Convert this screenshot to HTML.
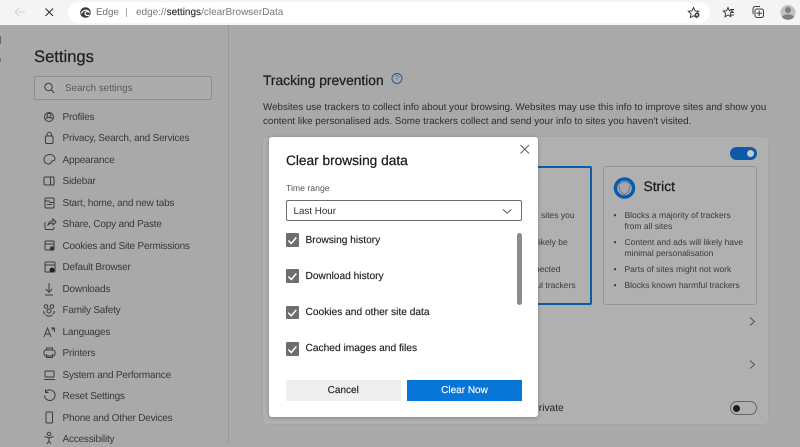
<!DOCTYPE html>
<html><head><meta charset="utf-8">
<style>
html,body{margin:0;padding:0}
body{width:800px;height:444px;overflow:hidden;position:relative;background:#a9a9a9;font-family:"Liberation Sans",sans-serif;color:#2a2a2a;text-rendering:geometricPrecision}
.a{position:absolute}
.t{position:absolute;white-space:nowrap;line-height:14px}
.n{position:absolute;left:62.5px;white-space:nowrap;font-size:10px;line-height:14px;color:#383838;letter-spacing:-.2px}
.s{position:absolute;font-size:8.5px;line-height:13px;white-space:nowrap;color:#3a3a3a}
svg{position:absolute;overflow:visible}
.i{fill:none;stroke:#3c3c3c;stroke-width:1}
.b{font-size:10.2px;color:#222;-webkit-text-stroke:.15px #222}
.h{-webkit-text-stroke:.25px currentColor}
.cb{position:absolute;left:285.5px;width:13.5px;height:13.5px;background:#6e6e6e;border-radius:1px}
</style></head><body>
<!-- top bar -->
<div class="a" style="left:0;top:0;width:800px;height:25px;background:#f4f4f4"></div>
<div class="a" style="left:68px;top:2px;width:642px;height:21px;background:#fff;border-radius:11px"></div>
<div class="a" style="left:0;top:36px;width:1px;height:8px;background:#666"></div>
<div class="a" style="left:0;top:58px;width:1px;height:4px;background:#777"></div>
<svg style="left:0;top:0" width="800" height="25">
<path d="M25 12H15M19.500 7.500L15 12l4.500 4.500" fill="none" stroke="#d4d4d4" stroke-width="1"/>
<path d="M45.500 8.500l7.500 7.500M53 8.500L45.500 16" fill="none" stroke="#333" stroke-width="1.100"/>
<circle cx="85.500" cy="12.500" r="5.300" fill="#3a3a3a"/><path d="M81.500 13.500c.8-3.500 5.500-4.500 7.500-1.500-2-.8-4-.2-4 1.500s2.500 2.500 4.500 1.500" fill="none" stroke="#fff" stroke-width="1.200"/>
<path d="M126.500 8v9" stroke="#aaa" stroke-width="1"/>
<path class="i" stroke-width=".9" d="M693.500 7.500l1.600 3.400 3.600.4-2.700 2.500.7 3.700-3.200-1.800-3.200 1.800.7-3.700-2.700-2.500 3.600-.4z"/>
<circle cx="697" cy="15" r="2.500" fill="#444"/><circle cx="697" cy="15" r="1" fill="#ddd"/>
<path class="i" d="M728 7.500l1.400 3.200 3.200.3-2.400 2.300.6 3.400-2.800-1.600-3 1.700.7-3.500-2.400-2.300 3.300-.3zM730 9.500h4M731 12.500h3M731 15h3"/>
<rect class="i" x="755" y="9" width="8.500" height="8.500" rx="2"/><path class="i" d="M753 14V9c0-1.500 1-2.500 2.500-2.500H760M759.200 10.500v5.500M756.500 13.200h5.500"/>
<circle cx="788" cy="12.500" r="7.500" fill="#c2c2c2"/><circle cx="788" cy="10" r="3" fill="#7e7e7e"/><path d="M782 17c1-3.500 11-3.500 12 0-2 3.500-10 3.500-12 0z" fill="#7e7e7e"/>
</svg>
<div class="t" style="left:96px;top:6px;font-size:9.800px;color:#707070">Edge</div>
<div class="t" style="left:136px;top:6px;font-size:10px;color:#777">edge://<span style="color:#333;-webkit-text-stroke:.15px #333">settings</span>/clearBrowserData</div>
<!-- sidebar -->
<div class="a" style="left:228px;top:25px;width:1px;height:419px;background:#979797"></div>
<div class="t h" style="left:34px;top:47px;font-size:16.600px;line-height:20px;color:#222">Settings</div>
<div class="a" style="left:34px;top:76px;width:176px;height:22px;border:1px solid #8f8f8f;border-radius:2px;background:#acacac"></div>
<svg style="left:0;top:0" width="230" height="444">
<circle class="i" cx="48.500" cy="87" r="3.700"/><path class="i" d="M51.300 90l3 3"/>
<g class="i">
<circle cx="49" cy="117" r="4.500"/><circle cx="49" cy="115.500" r="2"/><path d="M45.500 119c1-2 6-2 7 0"/>
<rect x="45.500" y="136" width="7.500" height="7.500" rx="1"/><path d="M47 136v-1.500a2.200 2.200 0 0 1 4.400 0V136"/>
<path d="M44 160c0-4 3-5.500 6-5.500s5 2 5 4.500-2 1-3 2-1 3-3 3-5-1-5-4z"/>
<rect x="44" y="177" width="10" height="8" rx="1"/><path d="M50.500 177v8"/>
<rect x="45" y="198" width="9" height="10" rx="1"/><path d="M45 201h4l1 1.500h4M47 204.500h5"/>
<path d="M45 222v6c0 1 .5 1.500 1.500 1.500h6c1 0 1.500-.5 1.500-1.500v-1M48 225c.5-2.500 2.500-4 5-4v-2l3 3-3 3v-2c-2 0-3.500 .5-5 2z"/>
<rect x="45" y="241" width="9" height="9" rx="1"/><path d="M45 244h9"/>
<rect x="45" y="262" width="10" height="10" rx="1"/><path d="M45 265h10"/>
<path d="M49 283v9M45.800 289l3.200 3.300 3.200-3.300M45 295h8"/>
<circle cx="46" cy="306.500" r="1.800"/><circle cx="52" cy="306.500" r="1.800"/><circle cx="49" cy="311" r="2"/><path d="M44 311c-1 2 .5 3 1.500 3M54 311c1 2-.5 3-1.500 3M46 315c1 1.500 5 1.500 6 0"/>
<path d="M44 337l3.500-9 3.500 9M45.300 334h4.500M51 328h3.500v4M54.500 328l-2.500 2"/>
<rect x="44" y="350" width="11" height="6" rx="2"/><path d="M46.500 350v-2h6v2M46.500 354v3.500h6V354"/>
<rect x="45" y="371" width="9" height="6" rx=".5"/><path d="M44 379.500h11"/>
<path d="M46 391.500a5.300 5.300 0 1 1-1.500 4M45.500 389.500v3h3"/>
<rect x="46" y="412" width="6.500" height="11" rx="1"/>
<circle cx="49" cy="434" r="1.700"/><path d="M44.500 436.500l4.500 1.500 4.500-1.500M49 438v3l-2 3M49 441l2 3"/>
</g>
<circle cx="52" cy="248.500" r="2.200" fill="#333"/><circle cx="52" cy="270" r="2.500" fill="#222"/>
</svg>
<div class="t" style="left:65px;top:81.500px;font-size:9.800px;color:#5a5a5a">Search settings</div>
<div class="n" style="top:110.500px">Profiles</div>
<div class="n" style="top:132px">Privacy, Search, and Services</div>
<div class="n" style="top:153.500px">Appearance</div>
<div class="n" style="top:175px">Sidebar</div>
<div class="n" style="top:196.500px">Start, home, and new tabs</div>
<div class="n" style="top:218px">Share, Copy and Paste</div>
<div class="n" style="top:239.500px">Cookies and Site Permissions</div>
<div class="n" style="top:261px">Default Browser</div>
<div class="n" style="top:282.500px">Downloads</div>
<div class="n" style="top:304px">Family Safety</div>
<div class="n" style="top:325.500px">Languages</div>
<div class="n" style="top:347px">Printers</div>
<div class="n" style="top:368.500px">System and Performance</div>
<div class="n" style="top:390px">Reset Settings</div>
<div class="n" style="top:411.500px">Phone and Other Devices</div>
<div class="n" style="top:433px">Accessibility</div>
<!-- main -->
<div class="t h" style="left:263px;top:73px;font-size:13.800px;line-height:16px;color:#1e1e1e">Tracking prevention</div>
<svg style="left:0;top:0" width="800" height="444"><circle cx="397" cy="78.500" r="5" fill="none" stroke="#1e5e9e" stroke-width="1"/></svg>
<div class="t" style="left:395px;top:71.500px;font-size:7px;color:#1e5e9e">?</div>
<div class="t" style="left:263px;top:101px;font-size:9.800px;color:#2c2c2c">Websites use trackers to collect info about your browsing. Websites may use this info to improve sites and show you</div>
<div class="t" style="left:263px;top:114.500px;font-size:9.800px;color:#2c2c2c">content like personalised ads. Some trackers collect and send your info to sites you haven't visited.</div>
<div class="a" style="left:263px;top:137px;width:505px;height:287px;background:#b0b0b0;border-radius:3px;box-shadow:0 0 1px #909090"></div>
<div class="a" style="left:730px;top:146.500px;width:27px;height:13px;background:#0c5aa8;border-radius:7px"></div>
<div class="a" style="left:746.500px;top:149.500px;width:7px;height:7px;background:#c8c8c8;border-radius:50%"></div>
<div class="a" style="left:500px;top:166px;width:88px;height:135px;border:2px solid #0c5aa8;border-radius:2px"></div>
<div class="a" style="left:603px;top:166px;width:152px;height:137px;border:1px solid #949494;border-radius:3px"></div>
<svg style="left:0;top:0" width="800" height="444">
<circle cx="624.500" cy="188" r="9" fill="none" stroke="#0c5aa8" stroke-width="3.500"/>
<path d="M624.500 181.500c2 1.200 4 1.600 5.500 1.600v4.500c0 3-2.500 5.500-5.500 7-3-1.500-5.500-4-5.500-7v-4.500c1.500 0 3.500-.4 5.500-1.600z" fill="#a6a6a6" stroke="#0c5aa8" stroke-width=".6"/>
<path d="M750 317.500l4.500 4-4.500 4M750 360.500l4.500 4-4.500 4" fill="none" stroke="#555" stroke-width="1"/>
</svg>
<div class="t h" style="left:643.500px;top:179px;font-size:13.800px;line-height:16px;color:#1a1a1a">Strict</div>
<div class="s" style="left:613.500px;top:208.500px">•</div>
<div class="s" style="left:624.500px;top:208.500px">Blocks a majority of trackers</div>
<div class="s" style="left:624.500px;top:219.500px">from all sites</div>
<div class="s" style="left:613.500px;top:235.500px">•</div>
<div class="s" style="left:624.500px;top:235.500px">Content and ads will likely have</div>
<div class="s" style="left:624.500px;top:246.500px">minimal personalisation</div>
<div class="s" style="left:613.500px;top:262.500px">•</div>
<div class="s" style="left:624.500px;top:262.500px">Parts of sites might not work</div>
<div class="s" style="left:613.500px;top:278.500px">•</div>
<div class="s" style="left:624.500px;top:278.500px">Blocks known harmful trackers</div>
<div class="s" style="left:541px;top:208.500px">sites you</div>
<div class="s" style="left:537px;top:235.500px">likely be</div>
<div class="s" style="left:526px;top:262.500px">expected</div>
<div class="s" style="left:534px;top:278.500px">ful trackers</div>
<div class="t" style="left:532px;top:401.500px;font-size:10.200px;color:#222">Private</div>
<div class="a" style="left:730px;top:401px;width:25px;height:12px;border:1px solid #666;border-radius:7px"></div>
<div class="a" style="left:733.200px;top:404.500px;width:7px;height:7px;background:#1c1c1c;border-radius:50%"></div>
<!-- dialog -->
<div class="a" style="left:269px;top:137px;width:269px;height:280px;background:#fff;border-radius:3px;box-shadow:0 1px 4px rgba(0,0,0,.25)"></div>
<svg style="left:0;top:0" width="800" height="444">
<path d="M520.500 145l8.500 8.500M529 145l-8.500 8.500" fill="none" stroke="#555" stroke-width=".9"/>
<path d="M503 209.500l4.200 3.700 4.200-3.700" fill="none" stroke="#555" stroke-width="1"/>
</svg>
<div class="t h" style="left:286px;top:153px;font-size:13.700px;line-height:16px;color:#1c1c1c">Clear browsing data</div>
<div class="t" style="left:286px;top:181px;font-size:8.700px;color:#555">Time range</div>
<div class="a" style="left:285.500px;top:200px;width:234.500px;height:19px;border:1px solid #6e6e6e;border-radius:2px"></div>
<div class="t" style="left:293.500px;top:204.500px;font-size:9.800px;color:#333">Last Hour</div>
<div class="cb" style="top:233.300px"></div>
<div class="cb" style="top:269.300px"></div>
<div class="cb" style="top:305.700px"></div>
<div class="cb" style="top:342.300px"></div>
<svg style="left:0;top:0" width="800" height="444">
<g fill="none" stroke="#fff" stroke-width="1.500"><path d="M288.300 240.500l3 3 5-6"/><path d="M288.300 276.500l3 3 5-6"/><path d="M288.300 312.800l3 3 5-6"/><path d="M288.300 349.500l3 3 5-6"/></g>
</svg>
<div class="t b" style="left:305.500px;top:233.500px">Browsing history</div>
<div class="t b" style="left:305.500px;top:269.500px">Download history</div>
<div class="t b" style="left:305.500px;top:305.500px">Cookies and other site data</div>
<div class="t b" style="left:305.500px;top:342px">Cached images and files</div>
<div class="a" style="left:517px;top:233px;width:5px;height:72px;background:#8c8c8c;border-radius:3px"></div>
<div class="a" style="left:285.500px;top:380px;width:115.500px;height:21px;background:#efefef;font-size:10px;line-height:22px;text-align:center;color:#222;-webkit-text-stroke:.15px #222">Cancel</div>
<div class="a" style="left:407px;top:380px;width:115px;height:21px;background:#0876d8;font-size:10px;line-height:22px;text-align:center;color:#f4f8fc;-webkit-text-stroke:.2px #f4f8fc">Clear Now</div>
</body></html>
